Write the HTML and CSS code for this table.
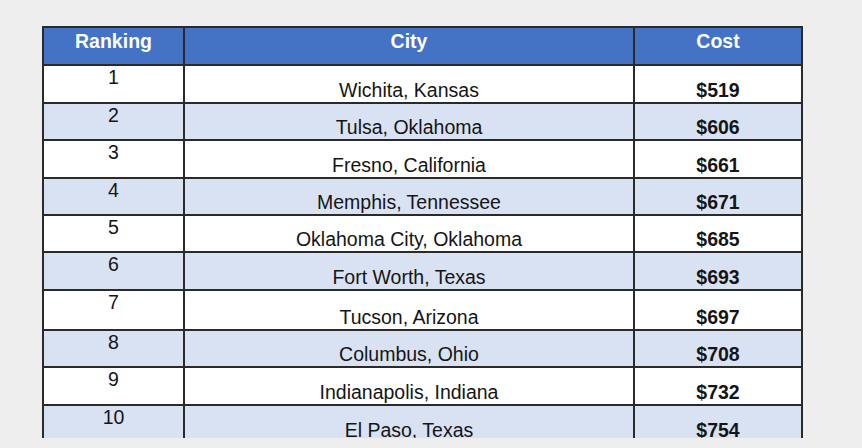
FILE: index.html
```html
<!DOCTYPE html>
<html>
<head>
<meta charset="utf-8">
<link rel="stylesheet" href="styles.css">
</head>
<body>
<div class="frame">
<table class="rank-table">
  <colgroup>
    <col class="c-rank">
    <col class="c-city">
    <col class="c-cost">
  </colgroup>
  <thead>
    <tr><th>Ranking</th><th>City</th><th>Cost</th></tr>
  </thead>
  <tbody>
    <tr><td class="rank">1</td><td class="city">Wichita, Kansas</td><td class="cost">$519</td></tr>
    <tr class="alt short"><td class="rank">2</td><td class="city">Tulsa, Oklahoma</td><td class="cost">$606</td></tr>
    <tr><td class="rank">3</td><td class="city">Fresno, California</td><td class="cost">$661</td></tr>
    <tr class="alt short"><td class="rank">4</td><td class="city">Memphis, Tennessee</td><td class="cost">$671</td></tr>
    <tr class="short"><td class="rank">5</td><td class="city">Oklahoma City, Oklahoma</td><td class="cost">$685</td></tr>
    <tr class="alt"><td class="rank">6</td><td class="city">Fort Worth, Texas</td><td class="cost">$693</td></tr>
    <tr class="tall"><td class="rank">7</td><td class="city">Tucson, Arizona</td><td class="cost">$697</td></tr>
    <tr class="alt short"><td class="rank">8</td><td class="city">Columbus, Ohio</td><td class="cost">$708</td></tr>
    <tr><td class="rank">9</td><td class="city">Indianapolis, Indiana</td><td class="cost">$732</td></tr>
    <tr class="alt"><td class="rank">10</td><td class="city">El Paso, Texas</td><td class="cost">$754</td></tr>
  </tbody>
</table>
</div>
</body>
</html>
```
FILE: styles.css
```css
html, body {
  margin: 0;
  padding: 0;
  background: #eeeeee;
}
.frame {
  padding: 26px 0 0 42px;
  height: 412px;
  overflow: hidden;
}
.rank-table {
  border-collapse: collapse;
  table-layout: fixed;
  width: 759px;
  background: #ffffff;
  font-family: "Liberation Sans", Arial, sans-serif;
  font-size: 19.5px;
  color: #151515;
}
.c-rank { width: 141px; }
.c-city { width: 450px; }
.c-cost { width: 168px; }
.rank-table th,
.rank-table td {
  border: 2px solid #2a2a2a;
  padding: 0;
  text-align: center;
  line-height: 23px;
}
.rank-table th {
  background: #4472c4;
  color: #ffffff;
  font-weight: bold;
  vertical-align: top;
  padding-top: 2px;
  box-sizing: border-box;
  height: 38px;
}
.rank-table td {
  height: 36px;
}
.rank-table tr.short td { height: 35px; }
.rank-table tr.tall td { height: 38px; }
.rank-table tr.alt td { background: #d9e2f3; }
.rank-table td.rank { vertical-align: top; }
.rank-table td.city { vertical-align: bottom; }
.rank-table td.cost { vertical-align: bottom; font-weight: bold; }
```
